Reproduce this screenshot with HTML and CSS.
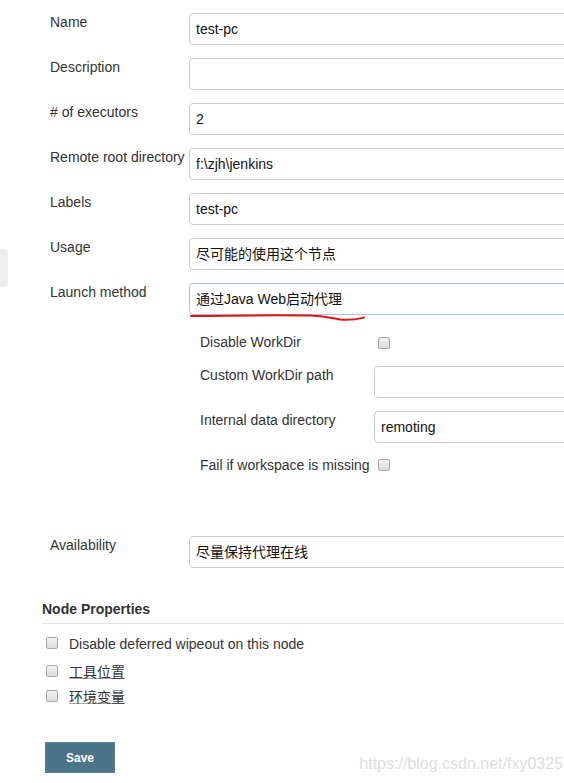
FILE: index.html
```html
<!DOCTYPE html>
<html>
<head>
<meta charset="utf-8">
<link rel="stylesheet" href="styles.css">
</head>
<body>
<div class="side-tab"></div>
<div class="form">
  <div class="label">Name</div>
  <div class="field">test-pc</div>
  <div class="label">Description</div>
  <div class="field"></div>
  <div class="label"># of executors</div>
  <div class="field">2</div>
  <div class="label">Remote root directory</div>
  <div class="field">f:\zjh\jenkins</div>
  <div class="label">Labels</div>
  <div class="field">test-pc</div>
  <div class="label">Usage</div>
  <div class="field">尽可能的使用这个节点</div>
  <div class="label">Launch method</div>
  <div class="field focus">通过Java Web启动代理
    <svg class="scribble" width="200" height="12" viewBox="0 0 200 12"><path d="M1 4 C40 3.5 90 3 120 3.6 C135 4 140 6 150 7.5 C160 8.5 168 7 174 5.6" fill="none" stroke="#e8120c" stroke-width="2" stroke-linecap="round"/></svg>
  </div>
  <div class="sub">
    <div class="sublabel first">Disable WorkDir</div>
    <div class="subctl"><span class="cb"></span></div>
    <div class="sublabel">Custom WorkDir path</div>
    <div class="field"></div>
    <div class="sublabel">Internal data directory</div>
    <div class="field">remoting</div>
    <div class="sublabel">Fail if workspace is missing</div>
    <div class="subctl"><span class="cb"></span></div>
  </div>
  <div class="label avail">Availability</div>
  <div class="field avail">尽量保持代理在线</div>
</div>
<div class="props">
  <div class="section-title">Node Properties</div>
  <div class="check-row first"><span class="cb"></span><span class="ctext">Disable deferred wipeout on this node</span></div>
  <div class="check-row second"><span class="cb"></span><span class="ctext link">工具位置</span></div>
  <div class="check-row third"><span class="cb"></span><span class="ctext link">环境变量</span></div>
  <div class="actions">
    <button class="save">Save</button>
    <span class="watermark">https://blog.csdn.net/fxy0325</span>
  </div>
</div>
</body>
</html>
```
FILE: styles.css
```css
html, body {
  margin: 0;
  padding: 0;
  overflow: hidden;
  background: #fff;
}
body {
  width: 564px;
  height: 783px;
  position: relative;
  font-family: "Liberation Sans", Arial, "Noto Sans CJK SC", sans-serif;
  font-size: 14px;
  color: #333;
}
.side-tab {
  position: absolute;
  left: 0;
  top: 249px;
  width: 8px;
  height: 38px;
  background: #eeeeee;
  border-radius: 0 4px 4px 0;
}
.form {
  display: grid;
  grid-template-columns: 139px 420px;
  row-gap: 13px;
  padding: 13px 0 0 50px;
}
.label {
  padding-top: 1px;
  line-height: 16px;
  white-space: nowrap;
}
.field {
  position: relative;
  box-sizing: border-box;
  height: 32px;
  border: 1px solid #cccccc;
  border-radius: 4px;
  padding: 0 6px;
  line-height: 30px;
  color: #111;
  white-space: nowrap;
}
.field.focus {
  border-color: #9fc3ec;
}
.scribble {
  position: absolute;
  left: 0;
  top: 28px;
}
.sub {
  grid-column: 1 / 3;
  margin: 6px 0 0 150px;
  display: grid;
  grid-template-columns: 174px 300px;
  grid-template-rows: 19px 32px 32px 16px;
  row-gap: 13px;
}
.sublabel {
  padding-top: 1px;
  line-height: 16px;
  white-space: nowrap;
}
.sublabel.first {
  padding-top: 0;
}
.subctl {
  padding: 3px 0 0 4px;
}
.cb {
  display: inline-block;
  box-sizing: border-box;
  width: 12px;
  height: 12px;
  border: 1px solid #a9a9a9;
  border-radius: 2px;
  background: linear-gradient(#f2f2f2, #dcdcdc);
  vertical-align: top;
}
.avail {
  margin-top: 51px;
}
.props {
  padding: 33px 0 0 42px;
}
.section-title {
  font-weight: bold;
  line-height: 16px;
  padding-bottom: 6px;
  border-bottom: 1px solid #e2e2e2;
  color: #333;
}
.check-row {
  display: flex;
  align-items: flex-start;
  line-height: 16px;
  padding-left: 4px;
}
.check-row .cb {
  margin-top: 1px;
  margin-right: 11px;
}
.check-row.first { margin-top: 12px; }
.check-row.second { margin-top: 12px; }
.check-row.third { margin-top: 9px; }
.ctext.link {
  text-decoration: underline;
  text-decoration-color: #aaa;
}
.actions {
  display: flex;
  align-items: flex-end;
  margin-top: 37px;
}
.save {
  width: 70px;
  height: 31px;
  margin-left: 3px;
  background: #4b7489;
  border: 1px solid #5a8296;
  color: #fff;
  font-family: "Liberation Sans", Arial, sans-serif;
  font-weight: bold;
  font-size: 12px;
  padding: 0;
}
.watermark {
  margin-left: auto;
  margin-right: 1px;
  font-size: 16px;
  line-height: 18px;
  color: #dddddd;
  white-space: nowrap;
}
```
